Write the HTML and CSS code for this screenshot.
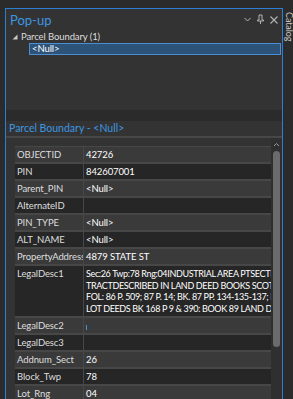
FILE: index.html
```html
<!DOCTYPE html>
<html lang="en">
<head>
    <meta charset="UTF-8">
    <title>Pop-up</title>
    <link rel="stylesheet" href="styles.css">
</head>
<body>
    <div class="frame">
        <div class="gutter"></div>
        <div class="pane">
            <div class="pane-header">
                <span class="pane-title">Pop-up</span>
                <div class="pane-tools">
                    <svg width="9" height="9" viewBox="0 0 9 9"><path d="M1.5 3 L4.5 6 L7.5 3" fill="none" stroke="#b4b4b4" stroke-width="1"/></svg>
                    <svg width="9" height="11" viewBox="0 0 9 11"><path d="M3 1 H6 V6 H7.5 V7 H1.5 V6 H3 Z M4.5 7 V10" fill="none" stroke="#b4b4b4" stroke-width="1"/></svg>
                    <svg width="10" height="10" viewBox="0 0 10 10"><path d="M1.5 1.5 L8.5 8.5 M8.5 1.5 L1.5 8.5" stroke="#b4b4b4" stroke-width="1.1"/></svg>
                </div>
            </div>
            <div class="tree">
                <div class="tree-node">
                    <svg class="expander" width="6" height="6" viewBox="0 0 6 6"><path d="M5.5 0.5 V5.5 H0.5 Z" fill="#c8c8c8"/></svg>
                    <span>Parcel Boundary (1)</span>
                </div>
                <div class="tree-leaf">&lt;Null&gt;</div>
            </div>
            <div class="splitter"></div>
            <div class="detail-title">Parcel Boundary - &lt;Null&gt;</div>
            <div class="detail">
                <div class="table-wrap">
                    <table class="attrs">
                        <tr><td class="field">OBJECTID</td><td>42726</td></tr>
                        <tr><td class="field">PIN</td><td>842607001</td></tr>
                        <tr><td class="field">Parent_PIN</td><td>&lt;Null&gt;</td></tr>
                        <tr><td class="field">AlternateID</td><td></td></tr>
                        <tr><td class="field">PIN_TYPE</td><td>&lt;Null&gt;</td></tr>
                        <tr><td class="field">ALT_NAME</td><td>&lt;Null&gt;</td></tr>
                        <tr><td class="field">PropertyAddress</td><td>4879 STATE ST</td></tr>
                        <tr><td class="field">LegalDesc1</td><td class="multi">Sec:26 Twp:78 Rng:04INDUSTRIAL AREA PTSECTION<br>TRACTDESCRIBED IN LAND DEED BOOKS SCOTT<br>FOL: 86 P. 509; 87 P. 14; BK. 87 PP. 134-135-137; BK<br>LOT DEEDS BK 168 P 9 &amp; 390: BOOK 89 LAND DEEDS</td></tr>
                        <tr><td class="field">LegalDesc2</td><td><span class="caret"></span></td></tr>
                        <tr><td class="field">LegalDesc3</td><td></td></tr>
                        <tr><td class="field">Addnum_Sect</td><td>26</td></tr>
                        <tr><td class="field">Block_Twp</td><td>78</td></tr>
                        <tr><td class="field">Lot_Rng</td><td>04</td></tr>
                    </table>
                </div>
                <div class="scrollbar">
                    <svg width="7" height="5" viewBox="0 0 7 5"><path d="M1 4 L3.5 1.5 L6 4" fill="none" stroke="#9a9a9a" stroke-width="1"/></svg>
                    <div class="thumb"></div>
                </div>
            </div>
        </div>
        <div class="side-tab"><span>Catalog</span></div>
    </div>
</body>
</html>
```

FILE: styles.css
```css
body {
    margin: 0;
    background-color: #2b2b2b;
    font-family: Lato, "Noto Sans", sans-serif;
    font-size: 9.5px;
    letter-spacing: -0.1px;
    color: #e6e6e6;
    overflow: hidden;
}
.frame {
    display: flex;
    height: 399px;
    padding-top: 8px;
    box-sizing: border-box;
}
.gutter {
    width: 5px;
    background-color: #2b2b2b;
}
.pane {
    flex: 1;
    display: flex;
    flex-direction: column;
    background-color: #333333;
    border: 1px solid #2a7fd4;
    border-bottom: none;
    min-width: 0;
}
.pane-header {
    display: flex;
    align-items: center;
    justify-content: space-between;
    height: 21px;
    padding: 0 3px 0 4px;
}
.pane-title {
    color: #3d96e0;
    font-size: 13px;
    letter-spacing: 0;
}
.pane-tools {
    display: flex;
    align-items: center;
    gap: 4px;
}
.tree {
    height: 79px;
    padding-top: 1px;
}
.tree-node {
    display: flex;
    align-items: center;
    gap: 3px;
    height: 11px;
    padding-left: 6px;
    color: #dcdcdc;
}
.expander {
    margin-top: 1px;
}
.tree-leaf {
    margin: 1px 1px 0 23px;
    height: 10px;
    line-height: 10px;
    padding-left: 2px;
    background-color: #2e5379;
    border: 1px solid #4b8ed3;
    color: #ffffff;
}
.splitter {
    height: 11px;
    background-color: #2b2b2b;
}
.detail-title {
    color: #3d96e0;
    font-size: 10.5px;
    letter-spacing: 0;
    height: 15px;
    line-height: 15px;
    padding-left: 3px;
    border-bottom: 2px solid #474747;
}
.detail {
    flex: 1;
    display: flex;
    min-height: 0;
}
.table-wrap {
    flex: 1;
    padding: 8px 0 0 9px;
    overflow: hidden;
    min-width: 0;
}
.attrs {
    border-collapse: collapse;
    width: 100%;
    table-layout: fixed;
    border-top: 1px solid #474747;
}
.attrs td {
    height: 15px;
    padding: 0 2px;
    white-space: nowrap;
    overflow: hidden;
    border-bottom: 2px solid #474747;
    color: #ffffff;
    vertical-align: middle;
}
.attrs td.field {
    width: 64px;
    color: #dedede;
    border-right: 1px solid #474747;
}
.attrs tr:nth-child(odd) td {
    background-color: #3a3a3a;
}
.attrs tr:nth-child(even) td {
    background-color: #262626;
}
.attrs td.multi {
    font-size: 9px;
    letter-spacing: -0.35px;
    line-height: 11.5px;
    padding-top: 2px;
    padding-bottom: 2px;
}
.attrs tr:nth-child(8) td.field {
    vertical-align: top;
    padding-top: 2px;
}
.caret {
    display: inline-block;
    width: 1px;
    height: 5px;
    background-color: #3d96e0;
    margin-top: 5px;
}
.scrollbar {
    width: 11px;
    display: flex;
    flex-direction: column;
    align-items: center;
    padding-top: 4px;
    background-color: #2f2f2f;
}
.thumb {
    width: 7px;
    height: 196px;
    margin-top: 4px;
    border-radius: 4px;
    background-color: #6b6b6b;
}
.side-tab {
    width: 10px;
    background-color: #2b2b2b;
    position: relative;
}
.side-tab span {
    position: absolute;
    top: 4px;
    left: 1px;
    writing-mode: vertical-rl;
    font-size: 9px;
    color: #c8c8c8;
}
```
